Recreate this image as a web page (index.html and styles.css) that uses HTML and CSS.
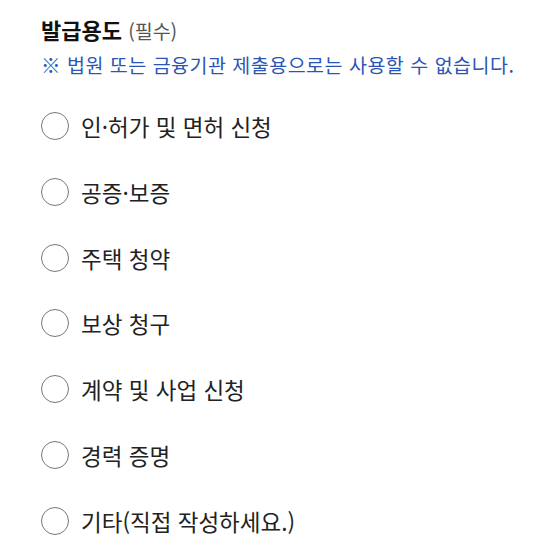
FILE: index.html
```html
<!DOCTYPE html>
<html lang="ko">

<head>
  <meta charset="UTF-8">
  <meta name="viewport" content="width=device-width, initial-scale=1.0">
  <title>발급용도</title>
  <link rel="stylesheet" href="styles.css">
</head>

<body>
  <div class="purpose" role="radiogroup" aria-labelledby="purposeTitle">
    <div id="purposeTitle" class="purposeTitle">발급용도 <span class="required">(필수)</span></div>
    <p class="notice">※ 법원 또는 금융기관 제출용으로는 사용할 수 없습니다.</p>
    <div class="options">
      <label class="option"><input type="radio" name="purpose" value="1"><span>인·허가 및 면허 신청</span></label>
      <label class="option"><input type="radio" name="purpose" value="2"><span>공증·보증</span></label>
      <label class="option"><input type="radio" name="purpose" value="3"><span>주택 청약</span></label>
      <label class="option"><input type="radio" name="purpose" value="4"><span>보상 청구</span></label>
      <label class="option"><input type="radio" name="purpose" value="5"><span>계약 및 사업 신청</span></label>
      <label class="option"><input type="radio" name="purpose" value="6"><span>경력 증명</span></label>
      <label class="option"><input type="radio" name="purpose" value="7"><span>기타(직접 작성하세요.)</span></label>
    </div>
  </div>
</body>

</html>
```

FILE: styles.css
```css
body {
  margin: 0;
  font-family: 'Noto Sans CJK KR', 'Noto Sans', sans-serif;
  background-color: white;
  color: #222;
}

.purpose {
  padding: 14px 0 0 41px;
}

.purposeTitle {
  font-size: 22px;
  font-weight: bold;
  line-height: 30px;
  color: #111;
}

.required {
  font-size: 19.5px;
  font-weight: normal;
  color: #555;
}

.notice {
  margin: 6px 0 0 0;
  font-size: 19.5px;
  letter-spacing: 0.5px;
  line-height: 26px;
  color: #2b55b5;
}

.options {
  display: flex;
  flex-direction: column;
  gap: 37.8px;
  margin-top: 34px;
}

.option {
  display: flex;
  align-items: center;
  gap: 12px;
  height: 28px;
  font-size: 22.5px;
  color: #222;
}

.option input {
  appearance: none;
  margin: 0;
  width: 28px;
  height: 28px;
  border: 1px solid #777;
  border-radius: 50%;
  background: white;
}
```
